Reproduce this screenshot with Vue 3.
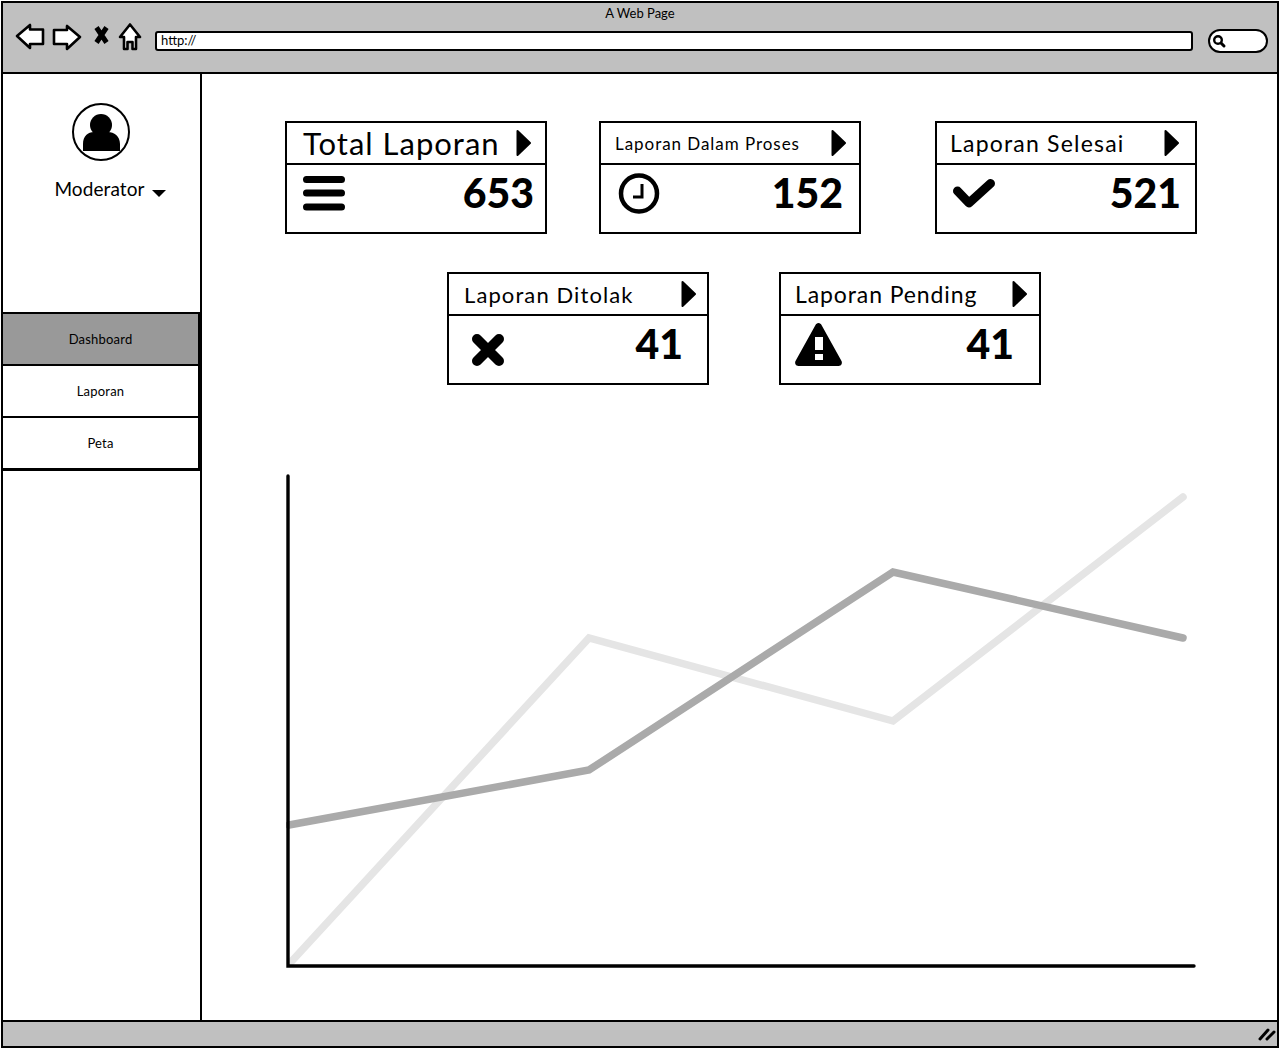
<template>
  <div class="window">
    <header class="titlebar">
      <div class="title">A Web Page</div>
      <div class="toolbar">
        <svg class="nav-icons" width="130" height="36" viewBox="0 0 130 36">
          <path d="M3 13 L16 2 L16 6.500 L29 6.500 L29 21 L16 21 L16 25 Z" class="outline" />
          <path d="M66 14 L53 3 L53 7 L40 7 L40 21 L53 21 L53 26 Z" class="outline" />
          <path d="M82.500 4.500 L92.500 19.500 M92.500 4.500 L82.500 19.500" class="cross" />
          <path d="M116 1.500 L126 14 L122 14 L122 26 L118.500 26 L118.500 19 L113.500 19 L113.500 26 L110 26 L110 14 L106 14 Z" class="outline" />
        </svg>
        <div class="address">http://</div>
        <div class="search">
          <svg width="16" height="16" viewBox="0 0 16 16">
            <circle cx="7" cy="7" r="3.8" fill="none" stroke="#000" stroke-width="2.4" />
            <path d="M10 10 L13 13" stroke="#000" stroke-width="3" stroke-linecap="round" />
          </svg>
        </div>
      </div>
    </header>

    <div class="content">
      <aside class="sidebar">
        <svg class="avatar" width="60" height="60" viewBox="0 0 60 60">
          <circle cx="30" cy="30" r="28" fill="#fff" stroke="#000" stroke-width="2" />
          <circle cx="30" cy="23" r="11" />
          <path d="M12 49 L12 42 C12 34 17 30 23 30 C26 33 34 33 37 30 C43 30 49 34 49 42 L49 49 Z" />
        </svg>
        <div class="user">
          <span>Moderator</span>
          <svg width="14" height="8" viewBox="0 0 14 8"><path d="M0 1 L14 1 L7 8 Z" /></svg>
        </div>
        <nav class="menu">
          <div v-for="item in menu" :key="item" class="menu-item" :class="{ active: item === 'Dashboard' }">
            {{ item }}
          </div>
        </nav>
      </aside>

      <main class="main">
        <div v-for="(row, r) in rows" :key="r" class="row" :class="'row-' + (r + 1)">
          <section v-for="card in row" :key="card.title" class="card">
            <div
              class="card-head"
              :style="{
                fontSize: card.size + 'px',
                letterSpacing: card.spacing + 'px',
                paddingLeft: card.left + 'px',
                paddingRight: card.arrowRight + 'px'
              }"
            >
              <span>{{ card.title }}</span>
              <svg width="15" height="28" viewBox="0 0 15 28"><path d="M1.5 2 L14 14 L1.5 26 Z" stroke="#000" stroke-width="2" stroke-linejoin="round" /></svg>
            </div>
            <div class="card-body" :style="{ paddingRight: card.numRight + 'px' }">
              <svg class="card-icon" width="50" height="50" viewBox="0 0 50 50" v-html="icons[card.icon]"></svg>
              <span class="number">{{ card.value }}</span>
            </div>
          </section>
        </div>

        <svg class="chart" width="910" height="494" viewBox="0 0 910 494">
          <polyline points="5,488 303,164 607,247 897,23" class="line light" />
          <polyline points="3,351 303,296 607,98 897,164" class="line dark" />
          <path d="M2 2 L2 492 L908 492" class="axis" />
        </svg>
      </main>
    </div>

    <footer class="statusbar">
      <svg width="18" height="14" viewBox="0 0 18 14">
        <path d="M2 12 L10 3 M9 12 L16 5" stroke="#000" stroke-width="3" stroke-linecap="round" />
      </svg>
    </footer>
  </div>
</template>

<script setup>
const menu = ['Dashboard', 'Laporan', 'Peta']

const rows = [
  [
    { title: 'Total Laporan', value: 653, icon: 'bars', size: 31, spacing: 1, left: 16, arrowRight: 14, numRight: 11 },
    { title: 'Laporan Dalam Proses', value: 152, icon: 'clock', size: 17, spacing: 0.95, left: 14, arrowRight: 13, numRight: 16 },
    { title: 'Laporan Selesai', value: 521, icon: 'check', size: 23, spacing: 1.2, left: 13, arrowRight: 16, numRight: 14 }
  ],
  [
    { title: 'Laporan Ditolak', value: 41, icon: 'cross', size: 22, spacing: 1.1, left: 15, arrowRight: 11, numRight: 24 },
    { title: 'Laporan Pending', value: 41, icon: 'warn', size: 23, spacing: 0.9, left: 14, arrowRight: 12, numRight: 25 }
  ]
]

// icon slot starts 16px inside the card
const icons = {
  bars: '<path d="M3.500 8.500 H38.500 M3.500 22 H38.500 M3.500 36 H38.500" stroke="#000" stroke-width="7" stroke-linecap="round"/>',
  clock: '<circle cx="22" cy="22.500" r="18" fill="none" stroke="#000" stroke-width="4.5"/><path d="M25 13 V26 H16" fill="none" stroke="#000" stroke-width="3"/>',
  check: '<path d="M4.500 20 L16 32 L37.500 12.500" fill="none" stroke="#000" stroke-width="9" stroke-linecap="round" stroke-linejoin="round"/>',
  cross: '<path d="M12 17 L34 39 M34 17 L12 39" stroke="#000" stroke-width="10" stroke-linecap="round"/>',
  warn: '<path transform="translate(-2.500 -1)" d="M24 2 C25.500 2 26.500 3 27 4 L47 40 C48 42 47 45 44 45 L4 45 C1 45 0 42 1 40 L21 4 C21.500 3 22.500 2 24 2 Z"/><rect x="18" y="15" width="8" height="13" fill="#fff"/><rect x="18" y="32" width="8" height="6" fill="#fff"/>'
}
</script>

<style>
body {
  background: #fff;
}
</style>

<style scoped>
.window {
  box-sizing: border-box;
  width: 1278px;
  height: 1047px;
  margin: 1px 1px 0;
  border: 2px solid #000;
  display: flex;
  flex-direction: column;
  font-family: Lato, "Liberation Sans", sans-serif;
  color: #000;
  overflow: hidden;
}

.titlebar {
  box-sizing: border-box;
  height: 71px;
  flex: none;
  background: #c0c0c0;
  border-bottom: 2px solid #000;
}

.title {
  height: 20px;
  padding-top: 2px;
  box-sizing: border-box;
  text-align: center;
  font-size: 13px;
  line-height: 16px;
}

.toolbar {
  display: flex;
  align-items: center;
  height: 36px;
  padding-left: 11px;
}

.nav-icons {
  flex: none;
}

.outline {
  fill: #fff;
  stroke: #000;
  stroke-width: 2.6;
  stroke-linejoin: round;
}

.cross {
  fill: none;
  stroke: #000;
  stroke-width: 5;
}

.address {
  box-sizing: border-box;
  width: 1038px;
  height: 20px;
  margin-left: 11px;
  padding-left: 4px;
  background: #fff;
  border: 2px solid #000;
  border-radius: 3px;
  font-size: 13px;
  line-height: 15px;
}

.search {
  box-sizing: border-box;
  width: 60px;
  height: 24px;
  margin-left: 15px;
  padding: 2px 0 0 1px;
  background: #fff;
  border: 2px solid #000;
  border-radius: 12px;
}

.content {
  flex: 1;
  display: flex;
  min-height: 0;
}

.sidebar {
  box-sizing: border-box;
  width: 199px;
  flex: none;
  padding-top: 28px;
  border-right: 2px solid #000;
  text-align: center;
}

.avatar {
  display: block;
  margin: 0 auto;
  transform: translateX(-1px);
}

.user {
  display: flex;
  justify-content: center;
  align-items: center;
  gap: 7px;
  margin-top: 14px;
  padding-left: 17px;
  font-size: 19px;
  line-height: 26px;
  letter-spacing: 0.1px;
}

.user svg {
  margin-top: 7px;
}

.menu {
  margin-top: 110px;
  border-right: 2px solid #000;
  border-bottom: 3px solid #000;
}

.menu-item {
  box-sizing: border-box;
  height: 52px;
  border-top: 2px solid #000;
  font-size: 13px;
  line-height: 50px;
  letter-spacing: 0.2px;
  background: #fff;
}

.menu-item.active {
  background: #999;
}

.main {
  flex: 1;
  padding-top: 47px;
  min-width: 0;
}

.row {
  display: flex;
}

.row-1 {
  padding-left: 83px;
  gap: 52px;
}

.row-1 .card:last-child {
  margin-left: 22px;
}

.row-2 {
  margin-top: 38px;
  padding-left: 245px;
  gap: 70px;
}

.card {
  box-sizing: border-box;
  width: 262px;
  height: 113px;
  border: 2px solid #000;
  background: #fff;
}

.card-head {
  box-sizing: border-box;
  height: 42px;
  display: flex;
  align-items: center;
  justify-content: space-between;
  border-bottom: 2px solid #000;
  white-space: nowrap;
}

.card-body {
  display: flex;
  justify-content: space-between;
  padding: 6px 0 0 16px;
}

.card-icon {
  flex: none;
  overflow: visible;
}

.number {
  margin-top: -1px;
  font-size: 41px;
  font-weight: 900;
  line-height: 46px;
}

.chart {
  display: block;
  margin: 89px 0 0 84px;
}

.line {
  fill: none;
  stroke-width: 7.5;
  stroke-linecap: round;
  stroke-linejoin: miter;
}

.light {
  stroke: #e5e5e5;
}

.dark {
  stroke: #aaa;
}

.axis {
  fill: none;
  stroke: #000;
  stroke-width: 3.4;
  stroke-linecap: round;
}

.statusbar {
  box-sizing: border-box;
  height: 26px;
  flex: none;
  display: flex;
  justify-content: flex-end;
  align-items: center;
  padding-right: 1px;
  background: #c0c0c0;
  border-top: 2px solid #000;
}
</style>
